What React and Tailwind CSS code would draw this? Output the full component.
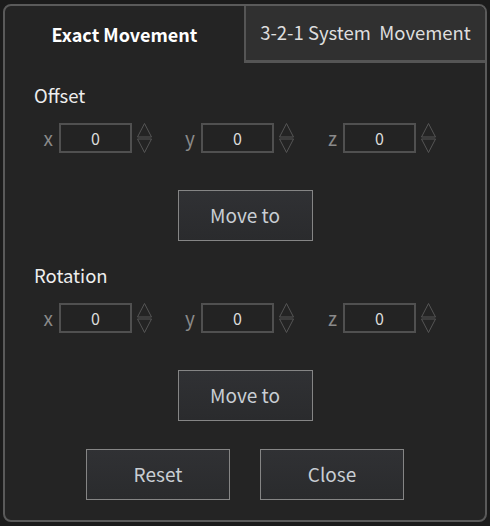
import React from "react";

const font = "font-['Noto_Sans_CJK_SC','Noto_Sans',sans-serif]";

function Spinner() {
  return (
    <svg width="15" height="30" viewBox="0 0 15 30" className="ml-[5px] shrink-0">
      <polygon points="7.5,0.5 14.5,14 0.5,14" fill="none" stroke="#555" strokeWidth="1" />
      <polygon points="0.5,16 14.5,16 7.5,29.5" fill="none" stroke="#555" strokeWidth="1" />
    </svg>
  );
}

function Field({ label }) {
  return (
    <div className="flex items-center">
      <span className="w-[20px] mr-[6px] text-right text-[19px] leading-[24px] text-[#8a8a8a]">{label}</span>
      <div className="w-[73px] h-[30px] border-2 border-[#505050] bg-[#232323] flex items-center justify-center text-[16px] text-[#dcdcdc]">
        0
      </div>
      <Spinner />
    </div>
  );
}

function FieldRow() {
  return (
    <div className="flex items-center gap-[23px] pl-[28px]">
      <Field label="x" />
      <Field label="y" />
      <Field label="z" />
    </div>
  );
}

function Button({ children, className = "" }) {
  return (
    <button
      className={
        "h-[51px] border border-[#858585] bg-gradient-to-b from-[#303134] to-[#2a2b2d] text-[19px] text-[#c9ced4] " +
        className
      }
    >
      {children}
    </button>
  );
}

export default function App() {
  return (
    <div className={`w-[490px] h-[526px] bg-[#1b1b1b] pt-[4px] px-[3px] pb-[4px] ${font}`}>
      <div className="h-[518px] border-2 border-[#5a5a5a] rounded-[8px] bg-[#242424] overflow-hidden flex flex-col">
        {/* tabs */}
        <div className="flex h-[57px] shrink-0">
          <div className="w-[239px] flex items-center justify-center text-[18px] font-bold text-white">
            Exact Movement
          </div>
          <div className="flex-1 bg-[#303030] border-l-2 border-b-[3px] border-[#555] flex items-center justify-center text-[18.5px] text-[#dedede] whitespace-pre">
            3-2-1 System  Movement
          </div>
        </div>

        <div className="flex flex-col">
          <div className="pl-[29px] mt-[20px] text-[18.5px] leading-[24px] text-[#eeeeee]">Offset</div>
          <div className="mt-[16px]">
            <FieldRow />
          </div>
          <div className="flex justify-center mt-[37px]">
            <Button className="w-[135px]">Move to</Button>
          </div>

          <div className="pl-[29px] mt-[22px] text-[18.5px] leading-[24px] text-[#eeeeee]">Rotation</div>
          <div className="mt-[16px]">
            <FieldRow />
          </div>
          <div className="flex justify-center mt-[37px]">
            <Button className="w-[135px]">Move to</Button>
          </div>

          <div className="flex justify-center gap-[30px] mt-[28px]">
            <Button className="w-[144px]">Reset</Button>
            <Button className="w-[144px]">Close</Button>
          </div>
        </div>
      </div>
    </div>
  );
}
